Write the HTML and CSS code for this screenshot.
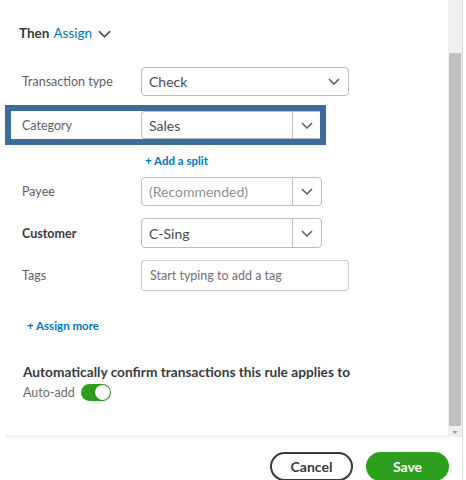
FILE: index.html
```html
<!DOCTYPE html>
<html>
<head>
<meta charset="utf-8">
<link rel="stylesheet" href="styles.css">
</head>
<body>
<div class="app">
  <div class="scroll-area">
    <div class="content">
      <div class="title"><span class="then">Then</span> <span class="assign">Assign</span>
        <svg class="title-chev" width="13" height="8" viewBox="0 0 13 8"><path d="M1 1.2l5.5 5.5 5.5-5.5" fill="none" stroke="#393a3d" stroke-width="1.6"/></svg>
      </div>

      <div class="row row-first">
        <div class="label">Transaction type</div>
        <div class="select wide">
          <span class="value">Check</span>
          <svg class="chev" width="12" height="7" viewBox="0 0 12 7"><path d="M1 1l5 5 5-5" fill="none" stroke="#5c5d62" stroke-width="1.5"/></svg>
        </div>
      </div>

      <div class="row highlight">
        <div class="label">Category</div>
        <div class="select split">
          <span class="value">Sales</span>
          <span class="btn"><svg width="12" height="7" viewBox="0 0 12 7"><path d="M1 1l5 5 5-5" fill="none" stroke="#5c5d62" stroke-width="1.5"/></svg></span>
        </div>
      </div>

      <div class="link split-link">+ Add a split</div>

      <div class="row row-payee">
        <div class="label">Payee</div>
        <div class="select split">
          <span class="value placeholder">(Recommended)</span>
          <span class="btn"><svg width="12" height="7" viewBox="0 0 12 7"><path d="M1 1l5 5 5-5" fill="none" stroke="#5c5d62" stroke-width="1.5"/></svg></span>
        </div>
      </div>

      <div class="row row-customer">
        <div class="label strong">Customer</div>
        <div class="select split tall">
          <span class="value">C-Sing</span>
          <span class="btn"><svg width="12" height="7" viewBox="0 0 12 7"><path d="M1 1l5 5 5-5" fill="none" stroke="#5c5d62" stroke-width="1.5"/></svg></span>
        </div>
      </div>

      <div class="row row-tags">
        <div class="label">Tags</div>
        <div class="input"><span class="ph">Start typing to add a tag</span></div>
      </div>

      <div class="link assign-more">+ Assign more</div>

      <div class="heading">Automatically confirm transactions this rule applies to</div>
      <div class="auto-row">
        <span class="auto-label">Auto-add</span>
        <span class="toggle"><span class="knob"></span></span>
      </div>

      <div class="separator"></div>
    </div>
    <div class="scrollbar">
      <div class="thumb"></div>
      <div class="arrow"></div>
    </div>
  </div>
  <div class="footer">
    <button class="btn-cancel">Cancel</button>
    <button class="btn-save">Save</button>
  </div>
</div>
</body>
</html>
```
FILE: styles.css
```css
html, body {
  margin: 0;
  padding: 0;
  background: #ffffff;
}
body {
  font-family: Lato, "Liberation Sans", sans-serif;
  color: #393a3d;
  width: 466px;
  height: 480px;
  overflow: hidden;
}
.app {
  width: 462px;
  height: 480px;
  border-right: 1px solid #d9d9d9;
  display: flex;
  flex-direction: column;
}
.scroll-area {
  display: flex;
  height: 438px;
}
.content {
  width: 448px;
  height: 438px;
  overflow: hidden;
  display: flex;
  flex-direction: column;
}
.title {
  margin: 23px 0 0 19px;
  height: 20px;
  line-height: 20px;
  font-size: 13.5px;
  display: flex;
  align-items: center;
}
.then {
  font-weight: 700;
  color: #393a3d;
}
.assign {
  color: #0077c5;
  margin-left: 4px;
}
.title-chev {
  margin-left: 6px;
  margin-top: 1px;
}
.row {
  display: grid;
  grid-template-columns: 119px auto;
  align-items: center;
  padding-left: 22px;
}
.row-first { margin-top: 24px; }
.label {
  font-size: 12.5px;
  color: #5f6066;
}
.label.strong {
  font-weight: 700;
  color: #393a3d;
}
.select {
  box-sizing: border-box;
  height: 29px;
  border: 1px solid #b9bcc2;
  border-radius: 4px;
  display: flex;
  align-items: center;
  background: #fff;
}
.select.wide {
  width: 208px;
  justify-content: space-between;
}
.select .value {
  padding-left: 7px;
  font-size: 14px;
  color: #4a4b50;
}
.select .value.placeholder {
  color: #8d9096;
}
.chev { margin-right: 8px; }
.select.split {
  width: 181px;
}
.select.split .value { flex: 1; }
.select.split .btn {
  width: 28px;
  height: 100%;
  border-left: 1px solid #b9bcc2;
  display: flex;
  align-items: center;
  justify-content: center;
}
.select.tall { height: 30px; }
.highlight {
  margin-top: 9px;
  margin-left: 5px;
  width: 321px;
  box-sizing: border-box;
  border: 6px solid #3e6c98;
  padding-left: 11px;
  height: 40px;
  overflow: hidden;
}
.highlight .select.split {
  height: 28px;
  width: 180px;
  border-right: none;
  border-radius: 4px 0 0 4px;
}
.link {
  color: #0077c5;
  font-size: 11.5px;
  font-weight: 700;
  line-height: 16px;
  height: 16px;
}
.split-link {
  margin: 8px 0 0 145px;
}
.row-payee { margin-top: 8px; }
.row-customer { margin-top: 12px; }
.row-tags { margin-top: 12px; }
.input {
  box-sizing: border-box;
  width: 208px;
  height: 31px;
  border: 1px solid #c6c9ce;
  border-radius: 3px;
  display: flex;
  align-items: center;
  overflow: hidden;
  padding: 0 3px 0 8px;
}
.input .ph {
  font-size: 12.5px;
  color: #707176;
  white-space: nowrap;
}
.assign-more {
  margin: 27px 0 0 27px;
}
.heading {
  margin: 29px 0 0 23px;
  font-size: 13.7px;
  font-weight: 700;
  line-height: 18px;
  color: #393a3d;
  white-space: nowrap;
}
.auto-row {
  margin: 2px 0 0 23px;
  height: 18px;
  display: flex;
  align-items: center;
}
.auto-label {
  font-size: 12.5px;
  color: #6b6c72;
}
.toggle {
  margin-left: 6px;
  width: 30px;
  height: 17px;
  border-radius: 9px;
  background: #2ca01c;
  display: flex;
  align-items: center;
  justify-content: flex-end;
  box-sizing: border-box;
  padding-right: 1px;
}
.knob {
  width: 15px;
  height: 15px;
  border-radius: 50%;
  background: #fff;
  box-shadow: 0 1px 3px rgba(0,0,0,0.25);
}
.separator {
  margin: 34px 0 0 6px;
  height: 3px;
  background: #f2f3f6;
}
.scrollbar {
  width: 14px;
  height: 437px;
  background: #f0f0f0;
  display: flex;
  flex-direction: column;
  align-items: center;
}
.thumb {
  margin-top: 53px;
  width: 12px;
  height: 373px;
  background: #c1c1c1;
}
.arrow {
  margin-top: 5px;
  width: 0;
  height: 0;
  border-left: 3px solid transparent;
  border-right: 3px solid transparent;
  border-top: 3px solid #a3a3a3;
}
.footer {
  display: flex;
  justify-content: flex-end;
  gap: 13px;
  padding: 14px 13px 0 0;
}
.footer button {
  width: 83px;
  height: 29px;
  border-radius: 15px;
  font-family: Lato, "Liberation Sans", sans-serif;
  font-size: 14px;
  font-weight: 700;
  padding: 0;
  cursor: pointer;
}
.btn-cancel {
  background: #fff;
  border: 2px solid #393a3d;
  color: #393a3d;
  font-weight: 400;
}
.btn-save {
  background: #2ca01c;
  border: 2px solid #2ca01c;
  color: #fff;
  font-weight: 700;
}
```
